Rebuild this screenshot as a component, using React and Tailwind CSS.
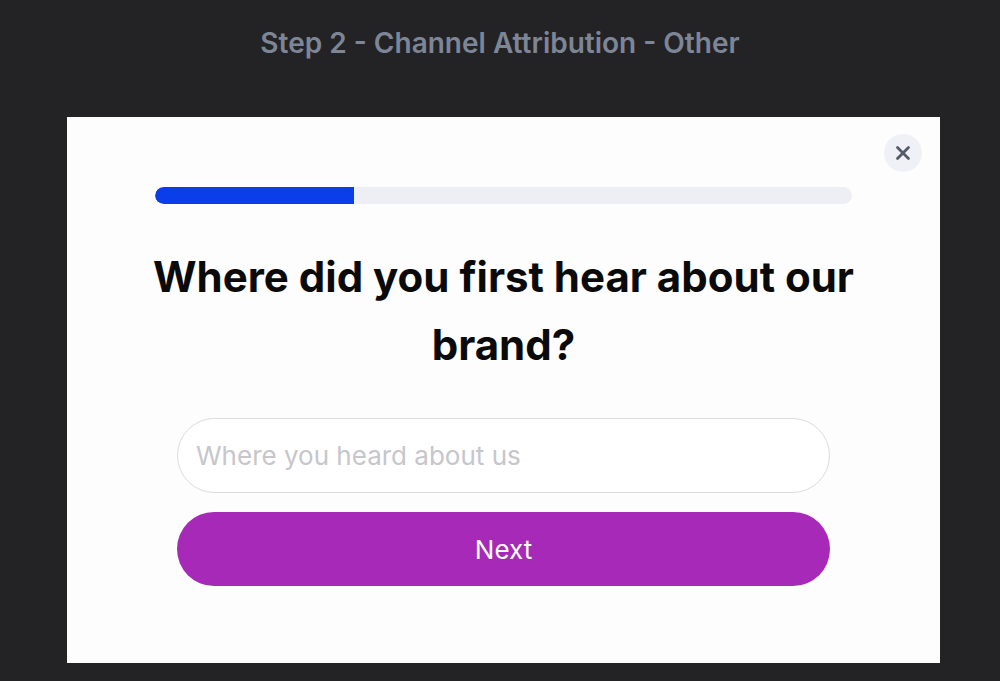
import { X } from 'lucide-react';

export default function App() {
  return (
    <div className="min-h-[681px] bg-[#232225] font-['Inter',sans-serif]">
      {/* step label */}
      <div className="h-[86px] pt-[24px] text-center text-[28px] leading-[38px] font-semibold text-[#7d8696]">
        Step 2 - Channel Attribution - Other
      </div>

      <div className="ml-[67px] mt-[31px] w-[873px] h-[546px] bg-[#fdfdfe] relative px-[88px] pt-[70px]">
        <button className="absolute top-[17px] right-[18px] w-[38px] h-[38px] rounded-full bg-[#f0f1f7] flex items-center justify-center text-[#555a6a]">
          <X size={22} strokeWidth={3} />
        </button>

        {/* progress */}
        <div className="h-[17px] rounded-full bg-[#eeeff5] overflow-hidden">
          <div className="h-full w-[199px] bg-[#0a3ee8] rounded-l-full" />
        </div>

        <h1 className="-mx-[20px] mt-[39px] text-center text-[42px] leading-[68px] font-bold text-[#0a0a0a]">
          Where did you first hear about our brand?
        </h1>

        <div className="mx-[22px] mt-[39px] flex flex-col gap-[19px]">
          <input
            type="text"
            placeholder="Where you heard about us"
            className="h-[75px] rounded-full border border-[#dcdce0] bg-white px-[18px] text-[26px] text-[#333] placeholder:text-[#c6c6cb] outline-none"
          />
          <button className="h-[74px] rounded-full bg-[#a629b8] text-white text-[26px]">
            Next
          </button>
        </div>
      </div>
    </div>
  );
}
